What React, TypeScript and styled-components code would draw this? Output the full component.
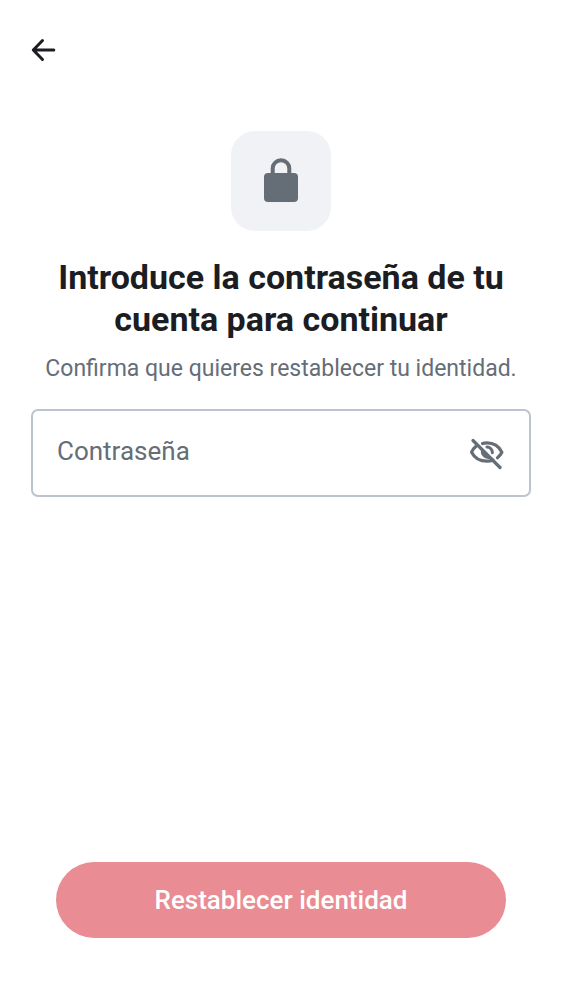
import React, { useState } from "react";
import styled, { createGlobalStyle } from "styled-components";

const GlobalStyle = createGlobalStyle`
  *, *::before, *::after { box-sizing: border-box; }
  body {
    margin: 0;
    background: #ffffff;
    color: #1b1d22;
    font-family: Roboto, "Liberation Sans", sans-serif;
  }
`;

const Screen = styled.form`
  min-height: 100vh;
  display: flex;
  flex-direction: column;
`;

const TopBar = styled.header`
  display: flex;
  align-items: center;
  height: 100px;
  padding: 0 20px;
`;

const IconButton = styled.button`
  display: flex;
  align-items: center;
  justify-content: center;
  flex: none;
  width: 48px;
  height: 48px;
  padding: 0;
  border: 0;
  border-radius: 24px;
  background: transparent;
  color: ${(p) => p.color};
  cursor: pointer;
`;

const Content = styled.main`
  flex: 1;
  display: flex;
  flex-direction: column;
  align-items: center;
  padding: 31px 31px 24px;
`;

const IconTile = styled.div`
  display: flex;
  align-items: center;
  justify-content: center;
  width: 100px;
  height: 100px;
  border-radius: 24px;
  background: #f0f2f5;
  color: #656d77;
`;

const Title = styled.h1`
  margin: 25px 0 0;
  max-width: 500px;
  font-size: 34px;
  line-height: 42px;
  font-weight: 700;
  text-align: center;
`;

const Subtitle = styled.p`
  margin: 13px 0 0;
  font-size: 23px;
  line-height: 32px;
  color: #656d77;
  text-align: center;
`;

const Field = styled.div`
  display: flex;
  align-items: center;
  width: 100%;
  height: 88px;
  margin-top: 24px;
  padding: 0 18px 0 24px;
  border: 2px solid #bdc4cf;
  border-radius: 7px;
`;

const PasswordInput = styled.input`
  flex: 1;
  min-width: 0;
  height: 56px;
  padding: 0 0 4px;
  border: 0;
  outline: 0;
  background: transparent;
  font: inherit;
  font-size: 26px;
  color: #1b1d22;

  &::placeholder {
    color: #656d77;
    opacity: 1;
  }
`;

const Actions = styled.footer`
  padding: 0 56px 62px;
`;

const PrimaryButton = styled.button`
  display: block;
  width: 100%;
  height: 76px;
  padding: 0 24px;
  border: 0;
  border-radius: 38px;
  background: #ea8c93;
  color: #ffffff;
  font: inherit;
  font-size: 26px;
  font-weight: 500;
`;

const BackIcon = () => (
  <svg width="26" height="26" viewBox="0 0 26 26" fill="none" stroke="currentColor" strokeWidth="3" strokeLinecap="round" strokeLinejoin="round" aria-hidden="true">
    <path d="M11.500 3.500 2.300 13 11.500 22.500M3 13H22.800" />
  </svg>
);

const LockIcon = () => (
  <svg width="34" height="46" viewBox="0 0 34 46" aria-hidden="true">
    <path d="M8.700 19V10.500a8.300 8.300 0 0 1 16.600 0V19" fill="none" stroke="currentColor" strokeWidth="4" />
    <rect y="15" width="34" height="29" rx="4" fill="currentColor" />
  </svg>
);

const EyeOffIcon = () => (
  <svg width="38" height="38" viewBox="0 0 38 38" fill="none" stroke="currentColor" strokeWidth="3.200" strokeLinecap="round" aria-hidden="true">
    <path d="M14.500 9.500C16 9 17.500 8.900 19 8.900C25.500 8.900 31 12.500 33.900 18.200C32.800 20.400 31.300 22.300 29.500 23.700" strokeLinejoin="round" />
    <path d="M8.500 11.800C6.400 13.500 4.700 15.700 3.600 18.200C6.400 23.800 12 27.200 19 27.200C21.200 27.200 23.200 26.900 25 26.200" strokeLinejoin="round" />
    <path d="M13.500 14.500 23.500 24.500C18.500 26.500 10.500 22 13.500 14.500Z" fill="currentColor" stroke="none" />
    <path d="M19 13.100A5.500 5.500 0 0 1 24.400 18.700" strokeWidth="3" />
    <path d="M5 6.500 32 33.500" />
  </svg>
);

const EyeIcon = () => (
  <svg width="38" height="38" viewBox="0 0 38 38" fill="none" stroke="currentColor" strokeWidth="3.200" strokeLinejoin="round" aria-hidden="true">
    <path d="M3.600 18.200C6.400 12.500 12 8.900 19 8.900S31 12.500 33.900 18.200C31 23.800 25.500 27.200 19 27.200S6.400 23.800 3.600 18.200Z" />
    <circle cx="19" cy="18" r="6" fill="currentColor" stroke="none" />
  </svg>
);

export default function App() {
  const [password, setPassword] = useState("");
  const [visible, setVisible] = useState(false);

  return (
    <Screen onSubmit={(e) => e.preventDefault()}>
      <GlobalStyle />
      <TopBar>
        <IconButton type="button" color="#1b1d22" aria-label="Atrás">
          <BackIcon />
        </IconButton>
      </TopBar>
      <Content>
        <IconTile>
          <LockIcon />
        </IconTile>
        <Title>Introduce la contraseña de tu cuenta para continuar</Title>
        <Subtitle>Confirma que quieres restablecer tu identidad.</Subtitle>
        <Field>
          <PasswordInput
            type={visible ? "text" : "password"}
            aria-label="Contraseña"
            placeholder="Contraseña"
            value={password}
            onChange={(e) => setPassword(e.target.value)}
          />
          <IconButton
            type="button"
            color="#656d77"
            aria-label={visible ? "Ocultar contraseña" : "Mostrar contraseña"}
            onClick={() => setVisible(!visible)}
          >
            {visible ? <EyeIcon /> : <EyeOffIcon />}
          </IconButton>
        </Field>
      </Content>
      <Actions>
        <PrimaryButton type="submit" disabled={password === ""}>
          Restablecer identidad
        </PrimaryButton>
      </Actions>
    </Screen>
  );
}
